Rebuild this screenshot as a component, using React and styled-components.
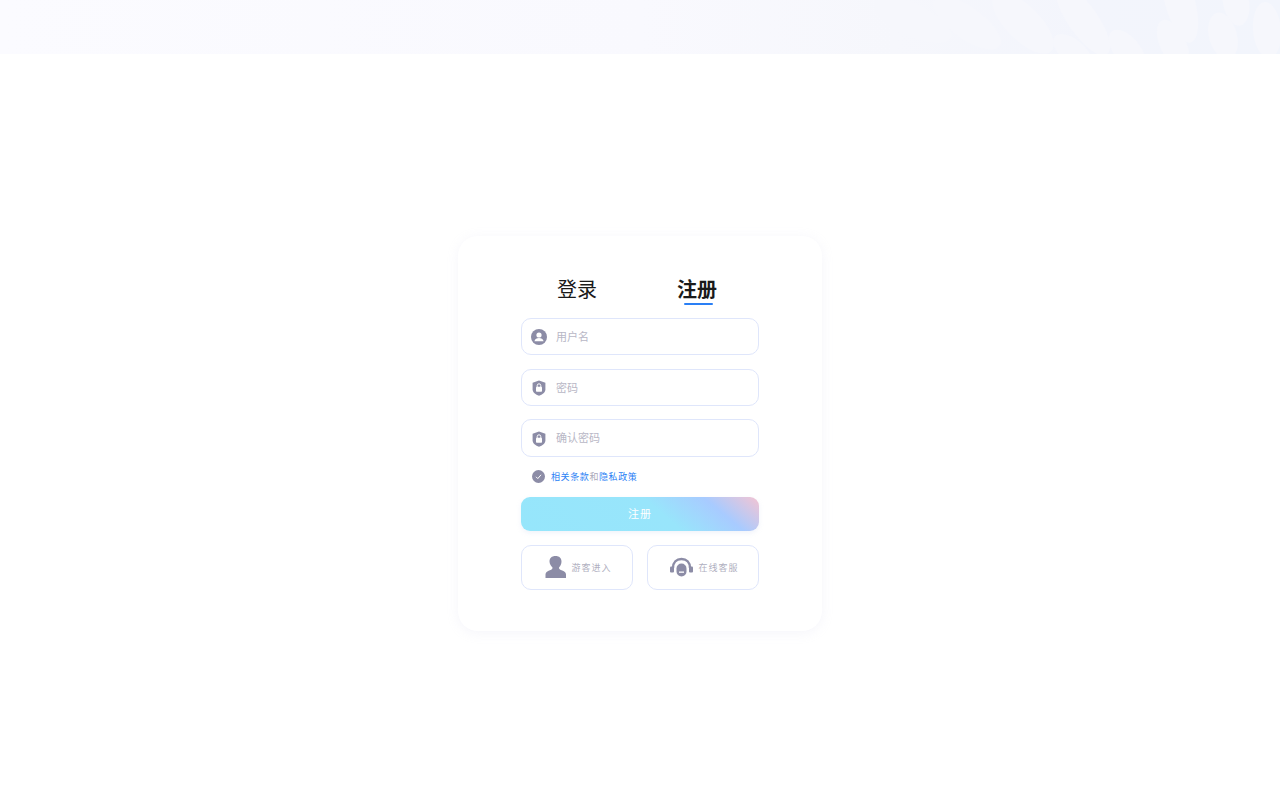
import styled, { createGlobalStyle } from "styled-components";

const GlobalStyle = createGlobalStyle`
    html, body {
        margin: 0;
        padding: 0;
        background: #fff;
        font-family: "Liberation Sans", "Noto Sans CJK SC", sans-serif;
    }
    * {
        box-sizing: border-box;
    }
`;

const Page = styled.div`
    width: 100%;
    height: 800px;
    overflow: hidden;
    background: #fff;
`;

const Banner = styled.svg`
    display: block;
    width: 100%;
    height: 54px;
`;

const Card = styled.div`
    width: 364px;
    height: 395px;
    margin: 182px auto 0;
    padding: 36px 63px 0;
    border-radius: 20px;
    background: #fff;
    box-shadow: 0 2px 12px rgba(190, 195, 225, 0.16);
`;

const Tabs = styled.div`
    display: flex;
    height: 34px;
    margin-bottom: 12px;
`;

const Tab = styled.div`
    position: relative;
    width: 112px;
    margin-right: ${(p) => (p.$first ? "8px" : "0")};
    text-align: center;
    font-size: 20px;
    line-height: 36px;
    color: #1a1a1a;
    font-weight: ${(p) => (p.$active ? 700 : 400)};

    &::after {
        content: "";
        display: ${(p) => (p.$active ? "block" : "none")};
        position: absolute;
        left: 43px;
        top: 31px;
        width: 29px;
        height: 2px;
        border-radius: 1px;
        background: #2a7ff5;
    }
`;

const Field = styled.label`
    display: flex;
    align-items: center;
    height: ${(p) => p.$height || 37}px;
    margin-bottom: ${(p) => p.$gap ?? 14}px;
    padding-left: 9px;
    border: 1px solid #dfe6fb;
    border-radius: 10px;
    background: #fff;
`;

const FieldIcon = styled.svg`
    flex: none;
    width: 16px;
    height: 16px;
    margin-right: 9px;
    margin-top: 1px;
`;

const Input = styled.input`
    flex: 1;
    min-width: 0;
    height: 100%;
    padding: 0;
    border: 0;
    outline: 0;
    background: transparent;
    font-family: inherit;
    font-size: 11px;
    color: #333;

    &::placeholder {
        color: #b8b7c6;
        opacity: 1;
    }
`;

const Agreement = styled.div`
    display: flex;
    align-items: center;
    height: 16px;
    margin: 11px 0 13px;
    padding-left: 11px;
    font-size: 9px;
    letter-spacing: 0.6px;
    color: #a9a8b8;
`;

const Check = styled.svg`
    flex: none;
    width: 13px;
    height: 13px;
    margin-right: 6px;
`;

const Terms = styled.a`
    color: #2a7ff5;
`;

const SubmitButton = styled.button`
    display: block;
    width: 100%;
    height: 34px;
    padding: 0 0 2px;
    border: 0;
    border-radius: 9px;
    background: linear-gradient(40deg, #96e6fb 0%, #98e5fb 58%, #a8cbff 80%, #f4c4d2 100%);
    box-shadow: 0 2px 5px rgba(170, 190, 230, 0.18);
    font-family: inherit;
    font-size: 11px;
    letter-spacing: 1px;
    color: #fff;
`;

const Shortcuts = styled.div`
    display: flex;
    justify-content: space-between;
    margin-top: 14px;
`;

const Shortcut = styled.div`
    display: flex;
    align-items: center;
    justify-content: center;
    gap: 5px;
    width: 112px;
    height: 45px;
    padding-left: 3px;
    border: 1px solid #dfe6fb;
    border-radius: 10px;
    font-size: 9px;
    letter-spacing: 1px;
    color: #b0afc0;
`;

const ShortcutIcon = styled.svg`
    flex: none;
    width: ${(p) => p.$width}px;
    height: 24px;
    margin-top: -2px;
`;

const petals = [
    [913, 20, 42, 16, 25],
    [967, 23, 40, 16, 35],
    [1023, 23, 40, 17, 45],
    [1073, 52, 24, 12, 40],
    [1083, 20, 42, 15, 55],
    [1127, 50, 24, 13, 50],
    [1180, 2, 42, 15, 75],
    [1173, 44, 26, 13, 65],
    [1223, 36, 24, 14, 75],
    [1236, 2, 24, 13, 80],
    [1267, 30, 28, 14, 85],
];

const UserIcon = () => (
    <FieldIcon viewBox="0 0 16 16">
        <circle cx="8" cy="8" r="8" fill="#8c8ca6" />
        <circle cx="8" cy="6" r="2.6" fill="#fff" />
        <path d="M3.4 12.2c.5-2.2 2.4-3.2 4.6-3.2s4.1 1 4.6 3.2z" fill="#fff" />
    </FieldIcon>
);

const LockIcon = () => (
    <FieldIcon viewBox="0 0 16 16">
        <path d="M8 .4l6.4 2.4v6.6c0 2.8-3 5-6.4 6.4-3.4-1.4-6.4-3.6-6.4-6.4V2.8z" fill="#8c8ca6" />
        <rect x="5" y="6.8" width="6" height="5" rx="0.8" fill="#fff" />
        <path d="M6.2 7V5.6a1.8 1.8 0 0 1 3.6 0V7" fill="none" stroke="#fff" strokeWidth="1" />
    </FieldIcon>
);

const App = () => {
    return (
        <Page>
            <GlobalStyle />
            <Banner viewBox="0 0 1280 54" preserveAspectRatio="none">
                <defs>
                    <linearGradient id="bannerFill" x1="0" y1="0" x2="1" y2="0">
                        <stop offset="0" stopColor="#fbfbff" />
                        <stop offset="0.5" stopColor="#f9f9fe" />
                        <stop offset="0.7" stopColor="#f6f7fc" />
                        <stop offset="0.85" stopColor="#f3f5fc" />
                        <stop offset="1" stopColor="#f2f5fc" />
                    </linearGradient>
                </defs>
                <rect width="1280" height="54" fill="url(#bannerFill)" />
                {petals.map(([cx, cy, rx, ry, angle], index) => (
                    <ellipse
                        key={index}
                        cx={cx}
                        cy={cy}
                        rx={rx}
                        ry={ry}
                        fill="#f6f7fc"
                        transform={`rotate(${angle} ${cx} ${cy})`}
                    />
                ))}
            </Banner>
            <Card>
                <Tabs>
                    <Tab $first>登录</Tab>
                    <Tab $active>注册</Tab>
                </Tabs>
                <Field>
                    <UserIcon />
                    <Input placeholder="用户名" />
                </Field>
                <Field $gap={13}>
                    <LockIcon />
                    <Input placeholder="密码" />
                </Field>
                <Field $height={38} $gap={0}>
                    <LockIcon />
                    <Input placeholder="确认密码" />
                </Field>
                <Agreement>
                    <Check viewBox="0 0 13 13">
                        <circle cx="6.5" cy="6.5" r="6.5" fill="#8c8ca6" />
                        <path d="M4 6.8l1.8 1.8L9 4.8" fill="none" stroke="#fff" strokeWidth="1" />
                    </Check>
                    <Terms>相关条款</Terms>和<Terms>隐私政策</Terms>
                </Agreement>
                <SubmitButton>注册</SubmitButton>
                <Shortcuts>
                    <Shortcut>
                        <ShortcutIcon $width={21} viewBox="0 0 21 24">
                            <path d="M10.500 1c3.800 0 6 2.200 6 5.400 0 2.400-1 4.600-2.400 5.800v1.300c0 .8 2 1.500 3.800 2.200 1.900.8 3 1.800 3.100 3.700v3.600H.5V19.400c.1-1.900 1.200-2.900 3.100-3.700 1.800-.7 3.800-1.400 3.800-2.200v-1.300C6 11 4.500 8.800 4.500 6.400 4.500 3.200 6.700 1 10.500 1z" fill="#8c8ca6" />
                        </ShortcutIcon>
                        <span>游客进入</span>
                    </Shortcut>
                    <Shortcut>
                        <ShortcutIcon $width={23} viewBox="0 0 23 24">
                            <path d="M3 13C3 7.500 6.500 4 11.500 4s8.500 3.500 8.500 9" fill="none" stroke="#8c8ca6" strokeWidth="2.400" />
                            <rect x="0" y="11.500" width="4" height="6" rx="1" fill="#8c8ca6" />
                            <rect x="19" y="11.500" width="4" height="6" rx="1" fill="#8c8ca6" />
                            <rect x="6.500" y="8.500" width="10" height="13" rx="5" fill="#8c8ca6" />
                            <rect x="9" y="16.500" width="5" height="1.300" fill="#fff" />
                        </ShortcutIcon>
                        <span>在线客服</span>
                    </Shortcut>
                </Shortcuts>
            </Card>
        </Page>
    );
};

export default App;
